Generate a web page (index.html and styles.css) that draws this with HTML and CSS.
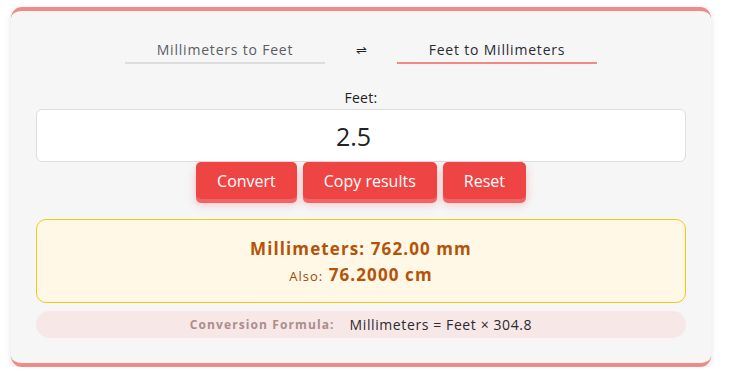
FILE: index.html
```html
<!DOCTYPE html>
<html lang="en">
<head>
    <meta charset="UTF-8">
    <meta name="viewport" content="width=device-width, initial-scale=1.0">
    <title>Feet to Millimeters Converter</title>
    <link rel="stylesheet" href="styles.css">
</head>
<body>

<div class="card">
    <div class="tabs">
        <span class="tab">Millimeters to Feet</span>
        <span class="swap">&#8652;</span>
        <span class="tab active">Feet to Millimeters</span>
    </div>

    <label class="field-label" for="feet">Feet:</label>
    <input class="value-input" type="number" id="feet" value="2.5" step="any">

    <div class="actions">
        <button type="button">Convert</button>
        <button type="button">Copy results</button>
        <button type="button">Reset</button>
    </div>

    <div class="result">
        <div class="result-main">Millimeters: 762.00 mm</div>
        <div class="result-alt"><span class="also">Also:</span> 76.2000 cm</div>
    </div>

    <div class="formula">
        <span class="formula-label">Conversion Formula:</span>
        <span class="formula-text">Millimeters = Feet × 304.8</span>
    </div>
</div>

</body>
</html>
```

FILE: styles.css
```css
body {
    margin: 0;
    font-family: "Open Sans", "Noto Sans", sans-serif;
    background-color: #ffffff;
    color: #333;
}
.card {
    box-sizing: border-box;
    width: 700px;
    margin: 7px 0 0 11px;
    padding: 25px 25px 25px;
    background-color: #f6f6f6;
    border-top: 4px solid #f08a85;
    border-bottom: 4px solid #f08a85;
    border-radius: 11px;
    box-shadow: 0 2px 6px rgba(0, 0, 0, 0.12);
}
.tabs {
    display: flex;
    justify-content: center;
    align-items: flex-start;
}
.tab {
    width: 200px;
    text-align: center;
    font-size: 14px;
    line-height: 18px;
    padding: 5px 0 3px;
    color: #5c5c66;
    letter-spacing: 0.8px;
    border-bottom: 2px solid #dddddd;
}
.tab.active {
    color: #2a2a33;
    border-bottom-color: #f08a85;
}
.swap {
    width: 72px;
    text-align: center;
    font-size: 13px;
    line-height: 18px;
    padding-top: 5px;
    color: #222;
}
.field-label {
    display: block;
    margin-top: 25px;
    margin-bottom: 2px;
    text-align: center;
    font-size: 14px;
    line-height: 18px;
    letter-spacing: 0.3px;
    color: #222;
}
.value-input {
    display: block;
    box-sizing: border-box;
    width: 100%;
    height: 53px;
    border: 1px solid #dedede;
    border-radius: 6px;
    background-color: #fff;
    font-family: inherit;
    font-size: 25px;
    color: #222;
    text-align: center;
}
.actions {
    display: flex;
    justify-content: center;
    gap: 6px;
}
.actions button {
    height: 37px;
    padding: 0 21px;
    border: none;
    border-radius: 5px;
    background-color: #ef4444;
    color: #fff;
    font-family: inherit;
    font-size: 16px;
    box-shadow: 0 4px 0 #f26366, 0 5px 10px rgba(239, 68, 68, 0.3);
    cursor: pointer;
}
.result {
    box-sizing: border-box;
    margin-top: 20px;
    height: 84px;
    padding: 16px 0;
    background-color: #fff8e6;
    border: 1px solid #f5c912;
    border-radius: 10px;
    text-align: center;
    color: #b45309;
}
.result-main, .result-alt {
    font-size: 17px;
    font-weight: bold;
    line-height: 26px;
    letter-spacing: 1.1px;
}
.also {
    font-size: 13px;
    font-weight: normal;
    color: #a0470c;
    letter-spacing: 1px;
}
.formula {
    margin-top: 8px;
    height: 27px;
    border-radius: 14px;
    background-color: #f7e7e7;
    display: flex;
    justify-content: center;
    align-items: center;
    gap: 15px;
}
.formula-label {
    font-size: 12px;
    font-weight: bold;
    color: #ad8c8c;
    letter-spacing: 1.1px;
}
.formula-text {
    font-size: 14px;
    color: #2a2a33;
    letter-spacing: 0.6px;
}
```
